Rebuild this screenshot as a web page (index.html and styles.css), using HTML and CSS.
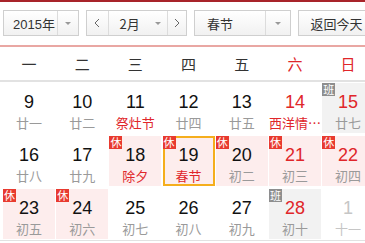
FILE: index.html
```html
<!DOCTYPE html>
<html>
<head>
	<meta charset="utf-8">
	<title>万年历</title>
	<link rel="stylesheet" href="styles.css">
</head>
<body>
<div class="calendar">
	<div class="toolbar">
		<div class="select year">
			<span class="value">2015年</span>
			<span class="drop"><i class="tri"></i></span>
		</div>
		<div class="select month">
			<span class="step"><svg width="6" height="10" viewBox="0 0 6 10"><polyline points="5,1 1,5 5,9" fill="none" stroke="#666" stroke-width="1"/></svg></span>
			<span class="value">2月</span>
			<span class="drop"><i class="tri"></i></span>
			<span class="step next"><svg width="6" height="10" viewBox="0 0 6 10"><polyline points="1,1 5,5 1,9" fill="none" stroke="#666" stroke-width="1"/></svg></span>
		</div>
		<div class="select holiday">
			<span class="value">春节</span>
			<span class="drop"><i class="tri"></i></span>
		</div>
		<div class="select today">
			<span class="value">返回今天</span>
		</div>
	</div>

	<div class="weekdays">
		<span>一</span><span>二</span><span>三</span><span>四</span><span>五</span><span class="weekend">六</span><span class="weekend">日</span>
	</div>

	<div class="days">
		<div class="day"><b>9</b><em>廿一</em></div>
		<div class="day"><b>10</b><em>廿二</em></div>
		<div class="day"><b>11</b><em class="fest">祭灶节</em></div>
		<div class="day"><b>12</b><em>廿四</em></div>
		<div class="day"><b>13</b><em>廿五</em></div>
		<div class="day"><b class="red">14</b><em class="fest">西洋情…</em></div>
		<div class="day work"><i class="badge ban">班</i><b class="red">15</b><em>廿七</em></div>

		<div class="day"><b>16</b><em>廿八</em></div>
		<div class="day"><b>17</b><em>廿九</em></div>
		<div class="day rest"><i class="badge">休</i><b>18</b><em class="fest">除夕</em></div>
		<div class="day rest selected"><i class="badge">休</i><b>19</b><em class="fest">春节</em></div>
		<div class="day rest"><i class="badge">休</i><b>20</b><em>初二</em></div>
		<div class="day rest"><i class="badge">休</i><b class="red">21</b><em>初三</em></div>
		<div class="day rest"><i class="badge">休</i><b class="red">22</b><em>初四</em></div>

		<div class="day rest"><i class="badge">休</i><b>23</b><em>初五</em></div>
		<div class="day rest"><i class="badge">休</i><b>24</b><em>初六</em></div>
		<div class="day"><b>25</b><em>初七</em></div>
		<div class="day"><b>26</b><em>初八</em></div>
		<div class="day"><b>27</b><em>初九</em></div>
		<div class="day work"><i class="badge ban">班</i><b class="red">28</b><em>初十</em></div>
		<div class="day other"><b>1</b><em>十一</em></div>
	</div>
</div>
</body>
</html>
```

FILE: styles.css
```css
html, body {
	margin: 0;
	overflow: hidden;
	background: #fff;
}

body {
	font-family: "Liberation Sans", "Noto Sans CJK SC", sans-serif;
	color: #222;
}

.calendar {
	width: 376px;
	border-top: 2px solid #a8242a;
}

/* top controls */
.toolbar {
	display: flex;
	gap: 7px;
	padding: 8px 0 0 3px;
	height: 26px;
	border-bottom: 2px solid #e9a7a3;
	padding-bottom: 9px;
}

.select {
	display: flex;
	align-items: center;
	height: 24px;
	border: 1px solid #cfcfcf;
	background: linear-gradient(#ffffff, #f1f1f1);
	font-size: 13px;
	color: #333;
	font-family: "Noto Sans CJK SC", sans-serif;
}

.select .value {
	flex: 1;
	padding-left: 9px;
}

.select .drop {
	width: 20px;
	height: 100%;
	border-left: 1px solid #dcdcdc;
	display: flex;
	align-items: center;
	justify-content: center;
}

.tri {
	border-left: 3px solid transparent;
	border-right: 3px solid transparent;
	border-top: 3px solid #999;
}

.year {
	width: 74px;
}

.year .value {
	font-family: "Liberation Sans", "Noto Sans CJK SC", sans-serif;
}

.month {
	width: 100px;
}

.month .value {
	padding-left: 11px;
}

.month .drop {
	border-left: none;
	width: 14px;
	margin-right: 2px;
}

.step {
	width: 21px;
	height: 100%;
	display: flex;
	align-items: center;
	justify-content: center;
	border-right: 1px solid #dcdcdc;
}

.step.next {
	border-right: none;
	border-left: 1px solid #dcdcdc;
	width: 18px;
}

.holiday {
	width: 96px;
}

.holiday .value {
	padding-left: 12px;
}

.holiday .drop {
	width: 24px;
}

.today {
	width: 76px;
}

.today .value {
	padding-left: 11px;
}

/* week header */
.weekdays {
	display: grid;
	grid-template-columns: repeat(7, 52px);
	column-gap: 1.2px;
	padding-left: 3px;
	height: 33px;
	align-items: center;
	border-bottom: 2px solid #e2e2e2;
	font-family: "Noto Sans CJK SC", sans-serif;
	font-size: 15px;
	color: #333;
}

.weekdays span {
	text-align: center;
}

.weekdays .weekend {
	color: #e0262a;
}

/* day grid */
.days {
	display: grid;
	grid-template-columns: repeat(7, 52px);
	grid-auto-rows: 50px;
	gap: 3px 1.2px;
	padding: 1px 0 1px 3px;
	border-bottom: 1px solid #e2e2e2;
}

.day {
	position: relative;
	text-align: center;
	padding-top: 9px;
	box-sizing: border-box;
}

.day b {
	display: block;
	font-weight: normal;
	font-size: 18px;
	line-height: 20px;
	color: #111;
}

.day em {
	display: block;
	margin-top: 3px;
	font-style: normal;
	font-family: "Noto Sans CJK SC", sans-serif;
	font-size: 13px;
	line-height: 16px;
	color: #9a9a9a;
}

.day b.red,
.day em.fest {
	color: #e0262a;
}

.day.rest {
	background: #fdeded;
}

.day.work {
	background: #f2f2f2;
}

.day.selected {
	box-shadow: 0 0 0 2px #f5ae1d inset;
}

.day.other b,
.day.other em {
	color: #c6c6c6;
}

.badge {
	position: absolute;
	top: 0;
	left: 0;
	width: 13px;
	height: 13px;
	background: #e83a2f;
	color: #fff;
	font-style: normal;
	font-family: "Noto Sans CJK SC", sans-serif;
	font-size: 11px;
	line-height: 13px;
	text-align: center;
}

.badge.ban {
	background: #8e8e8e;
}
```
